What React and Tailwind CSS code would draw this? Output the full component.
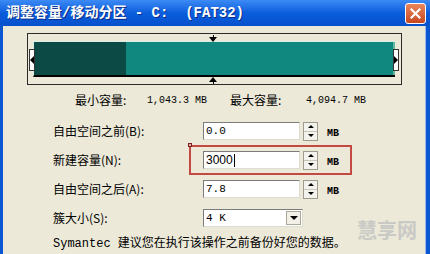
const CJK = "font-['Noto_Sans_CJK_SC',sans-serif]"
const MIX = "font-['Liberation_Mono','Noto_Sans_CJK_SC',monospace]"

function Spin() {
  return (
    <div className="w-[15px] h-[19px] flex flex-col border border-[#9d9b8e] bg-[#f3f2ec]">
      <div className="flex-1 flex items-center justify-center border-b border-[#c9c7b9]">
        <div className="w-0 h-0 border-l-[3px] border-r-[3px] border-b-[3px] border-l-transparent border-r-transparent border-b-black" />
      </div>
      <div className="flex-1 flex items-center justify-center">
        <div className="w-0 h-0 border-l-[3px] border-r-[3px] border-t-[3px] border-l-transparent border-r-transparent border-t-black" />
      </div>
    </div>
  )
}

function Field({ children }) {
  return (
    <div className={`w-[97px] h-[18px] bg-white border border-t-[#7b7b7b] border-l-[#7b7b7b] border-r-[#dedbd0] border-b-[#dedbd0] px-[2px] flex items-center text-[11px] text-black ${MIX}`}>
      {children}
    </div>
  )
}

function Row({ label, children }) {
  return (
    <div className="flex items-center h-[18px]">
      <div className={`w-[200px] shrink-0 pl-[50px] text-[12px] text-black ${CJK}`}>{label}</div>
      {children}
    </div>
  )
}

function MB() {
  return <div className="ml-[9px] self-end text-[10px] font-bold text-black font-['Liberation_Mono',monospace] leading-[12px]">MB</div>
}

export default function App() {
  return (
    <div className="w-[430px] h-[254px] overflow-hidden bg-[#0b56d2] flex flex-col">
      {/* Title bar */}
      <div className="h-[26px] shrink-0 flex items-center justify-between pl-[6px] pr-[4px] bg-linear-to-b from-[#3b8af5] via-[#0a5ddc] to-[#0851cc]">
        <span className={`text-[14px] font-bold text-white whitespace-pre [text-shadow:1px_1px_#0a2f8a] ${MIX}`}>调整容量/移动分区 - C:  (FAT32)</span>
        <div className="w-[21px] h-[21px] rounded-[3px] border border-white bg-linear-to-b from-[#e8865c] to-[#c9461f] flex items-center justify-center">
          <svg width="11" height="11" viewBox="0 0 11 11">
            <path d="M1.5 1.5 L9.5 9.5 M9.5 1.5 L1.5 9.5" stroke="white" strokeWidth="2.2" strokeLinecap="square" />
          </svg>
        </div>
      </div>

      {/* Body */}
      <div className="relative flex-1 ml-[3px] mr-[4px] bg-[#ece9d8] border-r border-[#9db8e6]">
        {/* Partition bar */}
        <div className="relative ml-[24px] mt-[7px] w-[375px] h-[52px] border border-[#2b2b2b] pl-[5px] pt-[7px]">
          <div className="flex w-[362px] h-[36px] border-t border-l border-[#d9efe6] border-b-2 border-b-black">
            <div className="w-[92px] bg-[#0c4b45]" />
            <div className="flex-1 bg-[#11887f] border-r-2 border-[#5fb89c]" />
          </div>
          {/* handles */}
          <div className="absolute left-[1px] top-[15px] w-[6px] h-[22px] bg-white border border-[#333] flex items-center">
            <div className="w-0 h-0 border-t-[4px] border-b-[4px] border-r-[4px] border-t-transparent border-b-transparent border-r-black" />
          </div>
          <div className="absolute left-[365px] top-[15px] w-[6px] h-[22px] bg-white border border-[#333] flex items-center">
            <div className="w-0 h-0 border-t-[4px] border-b-[4px] border-l-[4px] border-t-transparent border-b-transparent border-l-black" />
          </div>
          {/* markers */}
          <div className="absolute left-[181px] top-[1px] flex flex-col items-center">
            <div className="w-[1px] h-[2px] bg-black" />
            <div className="w-0 h-0 border-l-[4px] border-r-[4px] border-t-[5px] border-l-transparent border-r-transparent border-t-black" />
          </div>
          <div className="absolute left-[181px] top-[43px] flex flex-col items-center">
            <div className="w-0 h-0 border-l-[4px] border-r-[4px] border-b-[5px] border-l-transparent border-r-transparent border-b-black" />
            <div className="w-[1px] h-[2px] bg-black" />
          </div>
        </div>

        {/* Min / max */}
        <div className="flex items-center h-[14px] mt-[8px] pl-[72px] text-[12px] text-black">
          <span className={`w-[72px] ${CJK}`}>最小容量:</span>
          <span className="w-[83px] text-[10px] font-['Liberation_Mono',monospace]">1,043.3 MB</span>
          <span className={`w-[76px] ${CJK}`}>最大容量:</span>
          <span className="text-[10px] font-['Liberation_Mono',monospace]">4,094.7 MB</span>
        </div>

        {/* Form */}
        <div className="flex flex-col gap-[11px] mt-[15px]">
          <Row label="自由空间之前(B):">
            <Field>0.0</Field>
            <div className="ml-[3px]"><Spin /></div>
            <MB />
          </Row>
          <Row label="新建容量(N):">
            <Field>
              <span className="font-['Liberation_Sans',sans-serif] text-[12px]">3000</span>
              <span className="w-[1px] h-[13px] bg-black ml-[1px]" />
            </Field>
            <div className="ml-[3px]"><Spin /></div>
            <MB />
          </Row>
          <Row label="自由空间之后(A):">
            <Field>7.8</Field>
            <div className="ml-[3px]"><Spin /></div>
            <MB />
          </Row>
          <Row label="簇大小(S):">
            <div className="w-[100px] h-[18px] bg-white border border-t-[#7b7b7b] border-l-[#7b7b7b] border-r-[#dedbd0] border-b-[#dedbd0] flex items-center justify-between pl-[2px] pr-[1px]">
              <span className={`text-[11px] text-black ${MIX}`}>4 K</span>
              <div className="w-[15px] h-[14px] bg-[#f1efe6] border border-[#a9a797] flex items-center justify-center">
                <div className="w-0 h-0 border-l-[4px] border-r-[4px] border-t-[4px] border-l-transparent border-r-transparent border-t-black" />
              </div>
            </div>
          </Row>
        </div>

        <div className={`mt-[10px] pl-[50px] text-[12px] leading-[14px] text-black whitespace-pre ${MIX}`}>Symantec 建议您在执行该操作之前备份好您的数据。</div>

        {/* annotation box */}
        <div className="absolute left-[186px] top-[119px] w-[163px] h-[30px] border-2 border-[#c24a43]" />
        <div className="absolute left-[185px] top-[117px] w-[4px] h-[4px] border border-[#7a1f1f] bg-[#e9b0a8]" />

        {/* watermark */}
        <div className={`absolute left-[354px] top-[189px] text-[20px] font-bold text-[#c9c9c6] ${CJK}`}>慧享网</div>
      </div>
    </div>
  )
}
